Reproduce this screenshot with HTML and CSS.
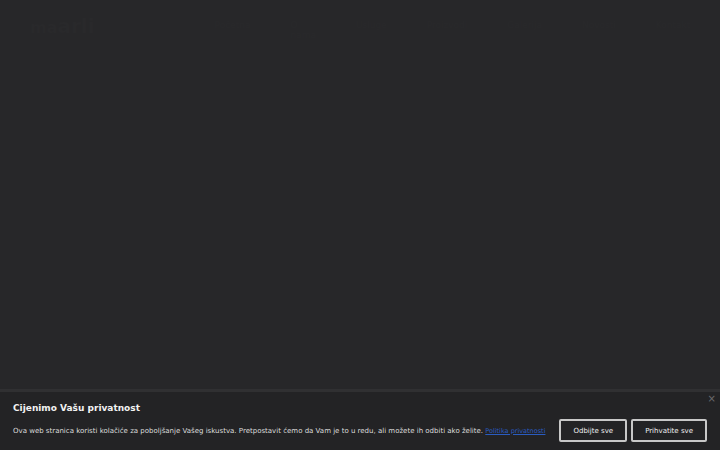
FILE: index.html
```html
<!DOCTYPE html>
<html lang="hr">
<head>
<meta charset="utf-8">
<title>Privatnost</title>
<link rel="stylesheet" href="styles.css">
</head>
<body>
<div class="page">
  <header class="header">
    <div class="logo">ma<span class="logo-b">arli</span></div>
    <nav class="nav">
      <span>Početna</span><span>O nama</span><span>Usluge</span><span>Proizvodi</span><span>Galerija</span><span>Novosti</span><span>Kontakt</span>
    </nav>
  </header>
</div>
<div class="banner">
  <button class="close" aria-label="Zatvori">×</button>
  <h2 class="title">Cijenimo Vašu privatnost</h2>
  <div class="row">
    <p class="text">Ova web stranica koristi kolačiće za poboljšanje Vašeg iskustva. Pretpostavit ćemo da Vam je to u redu, ali možete ih odbiti ako želite. <a href="#" class="link">Politika privatnosti</a></p>
    <div class="buttons">
      <button class="btn">Odbijte sve</button>
      <button class="btn">Prihvatite sve</button>
    </div>
  </div>
</div>
</body>
</html>
```
FILE: styles.css
```css
html, body {
  margin: 0;
  padding: 0;
  height: 100%;
}
body {
  background: #272729;
  font-family: "DejaVu Sans", Verdana, sans-serif;
  overflow: hidden;
}
.page {
  height: 100%;
}
.header {
  display: flex;
  align-items: center;
  padding: 14px 30px 0 30px;
  height: 24px;
}
.logo {
  font-size: 16px;
  color: #29292b;
  font-weight: bold;
  margin-right: 120px;
}
.logo-b {
  font-size: 20px;
}
.nav {
  display: flex;
  gap: 40px;
  font-size: 9px;
  color: #29292b;
  padding-top: 8px;
}
.banner {
  position: fixed;
  left: 0;
  right: 0;
  bottom: 0;
  background: #232325;
  border-top: 3px solid #303032;
  padding: 10px 13px 0 13px;
  box-sizing: border-box;
  height: 61px;
}
.close {
  position: absolute;
  right: 4px;
  top: 2px;
  background: none;
  border: none;
  color: #6a6a6d;
  font-size: 10px;
  padding: 0;
  line-height: 10px;
  font-family: "DejaVu Sans", sans-serif;
}
.title {
  margin: 0;
  font-size: 9px;
  font-weight: bold;
  color: #f2f2f2;
  line-height: 12px;
}
.row {
  display: flex;
  align-items: center;
  justify-content: space-between;
  margin-top: 5px;
}
.text {
  margin: 0;
  font-size: 7px;
  color: #dcdcdc;
  line-height: 10px;
  white-space: nowrap;
}
.link {
  color: #2a5cc0;
  text-decoration: underline;
  font-size: 6.5px;
}
.buttons {
  display: flex;
  gap: 4px;
}
.btn {
  background: transparent;
  border: 2px solid #c8c8c8;
  color: #f0f0f0;
  font-family: "DejaVu Sans", sans-serif;
  font-size: 7px;
  height: 23px;
  padding: 0 12px;
  border-radius: 2px;
  white-space: nowrap;
}
```
